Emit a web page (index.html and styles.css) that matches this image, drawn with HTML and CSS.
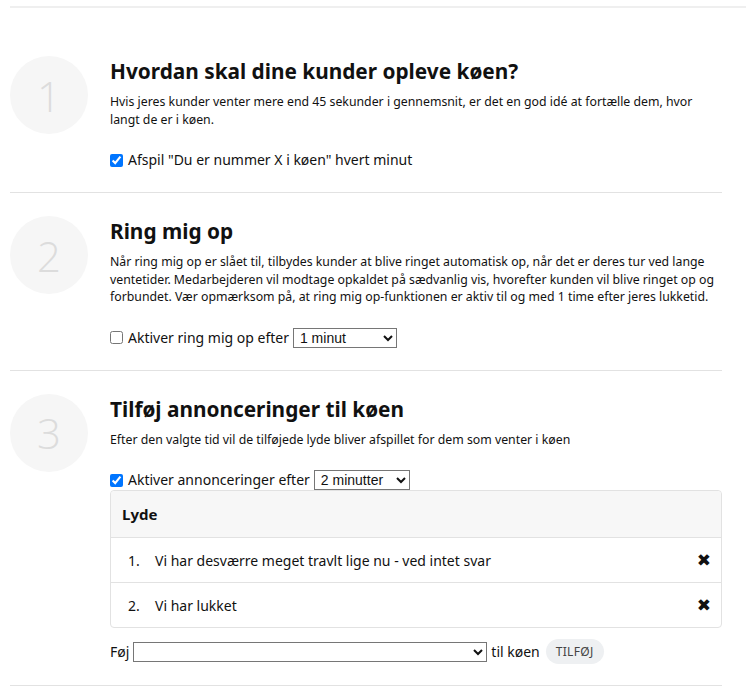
FILE: index.html
```html
<!DOCTYPE html>
<html lang="da">
<head>
    <meta charset="UTF-8">
    <meta name="viewport" content="width=device-width, initial-scale=1.0">
    <title>Kø-indstillinger</title>
    <link rel="stylesheet" href="styles.css">
</head>
<body>
    <div class="topbar"></div>

    <div class="page">
        <section class="step first">
            <div class="step-number">1</div>
            <div class="step-body">
                <h2>Hvordan skal dine kunder opleve køen?</h2>
                <p class="step-text">Hvis jeres kunder venter mere end 45 sekunder i gennemsnit, er det en god idé at fortælle dem, hvor langt de er i køen.</p>
                <label class="option">
                    <input type="checkbox" checked>
                    Afspil "Du er nummer X i køen" hvert minut
                </label>
            </div>
        </section>

        <section class="step">
            <div class="step-number">2</div>
            <div class="step-body">
                <h2>Ring mig op</h2>
                <p class="step-text">Når ring mig op er slået til, tilbydes kunder at blive ringet automatisk op, når det er deres tur ved lange ventetider. Medarbejderen vil modtage opkaldet på sædvanlig vis, hvorefter kunden vil blive ringet op og forbundet. Vær opmærksom på, at ring mig op-funktionen er aktiv til og med 1 time efter jeres lukketid.</p>
                <label class="option">
                    <input type="checkbox">
                    Aktiver ring mig op efter
                    <select class="small-select select-1">
                        <option>1 minut</option>
                        <option>2 minutter</option>
                    </select>
                </label>
            </div>
        </section>

        <section class="step last">
            <div class="step-number">3</div>
            <div class="step-body">
                <h2>Tilføj annonceringer til køen</h2>
                <p class="step-text">Efter den valgte tid vil de tilføjede lyde bliver afspillet for dem som venter i køen</p>
                <label class="option">
                    <input type="checkbox" checked>
                    Aktiver annonceringer efter
                    <select class="small-select select-2">
                        <option>2 minutter</option>
                        <option>1 minut</option>
                    </select>
                </label>

                <div class="sounds">
                    <div class="sounds-head">Lyde</div>
                    <div class="sound-row">
                        <span class="sound-no">1.</span>
                        <span class="sound-name">Vi har desværre meget travlt lige nu - ved intet svar</span>
                        <span class="remove">&#10006;</span>
                    </div>
                    <div class="sound-row">
                        <span class="sound-no">2.</span>
                        <span class="sound-name">Vi har lukket</span>
                        <span class="remove">&#10006;</span>
                    </div>
                </div>

                <div class="add-row">
                    Føj
                    <select class="wide-select">
                        <option></option>
                    </select>
                    til køen
                    <button class="add-btn">Tilføj</button>
                </div>
            </div>
        </section>
    </div>
</body>
</html>
```

FILE: styles.css
```css
body {
    margin: 0;
    font-family: "Noto Sans", "Open Sans", sans-serif;
    color: #111;
    background: #fff;
}

.topbar {
    margin: 6px 0 0 10px;
    border-top: 2px solid #efefef;
}

.page {
    width: 712px;
    margin-left: 10px;
}

.step {
    display: flex;
    gap: 22px;
    padding: 23px 0 22px;
    border-bottom: 1px solid #e2e2e2;
}

.step.first {
    padding-top: 48px;
}

.step.last {
    padding-bottom: 21px;
}

.step-number {
    flex: none;
    width: 78px;
    height: 78px;
    border-radius: 50%;
    background: #f6f6f6;
    color: #dcdcdc;
    font-family: "Open Sans", sans-serif;
    font-size: 42px;
    font-weight: 300;
    display: flex;
    align-items: center;
    justify-content: center;
}

.step-body {
    flex: 1;
}

.step-body h2 {
    margin: 2px 0 9px;
    font-size: 20.8px;
    line-height: 26px;
    font-weight: 700;
}

.step-text {
    margin: 0 0 22px;
    font-size: 12.3px;
    line-height: 17.5px;
}

.option {
    display: flex;
    align-items: center;
    gap: 4px;
    font-size: 14px;
    line-height: 20px;
}

.option input {
    margin: 0 1px 0 0;
    width: 13px;
    height: 13px;
}

.small-select,
.wide-select {
    font-family: "Liberation Sans", Arial, sans-serif;
    font-size: 14px;
    height: 20px;
    padding: 0 2px;
    border: 1px solid #767676;
    border-radius: 0;
    background: #fff;
    color: #111;
}

.select-1 {
    width: 104px;
}

.select-2 {
    width: 96px;
}

.sounds {
    border: 1px solid #e2e2e2;
    border-radius: 4px;
}

.sounds-head {
    background: #f7f7f7;
    padding: 0 11px;
    height: 46px;
    display: flex;
    align-items: center;
    font-size: 15px;
    font-weight: 700;
    border-bottom: 1px solid #e2e2e2;
    border-radius: 4px 4px 0 0;
}

.sound-row {
    display: flex;
    align-items: center;
    height: 44px;
    padding: 0 10px 0 17px;
    font-size: 14px;
}

.sound-row + .sound-row {
    border-top: 1px solid #e2e2e2;
}

.sound-no {
    width: 27px;
}

.sound-name {
    flex: 1;
}

.remove {
    font-family: "DejaVu Sans", sans-serif;
    font-size: 17px;
}

.add-row {
    display: flex;
    align-items: center;
    gap: 4px;
    margin-top: 11px;
    font-size: 14px;
}

.wide-select {
    width: 354px;
}

.add-btn {
    margin-left: 2px;
    border: none;
    border-radius: 13px;
    background: #eef0f2;
    color: #444;
    font-family: "Noto Sans", sans-serif;
    font-size: 12px;
    letter-spacing: 0.3px;
    text-transform: uppercase;
    padding: 0 10px;
    height: 25px;
}
```
